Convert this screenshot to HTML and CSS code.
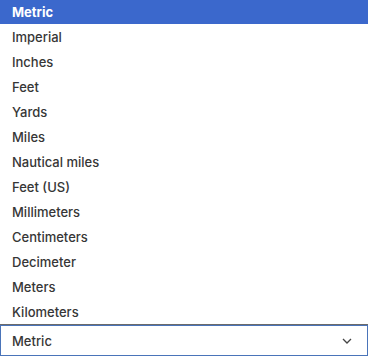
FILE: index.html
```html
<!DOCTYPE html>
<html>
<head>
<meta charset="utf-8">
<link rel="stylesheet" href="styles.css">
</head>
<body>
<div class="picker">
  <ul class="options">
    <li class="option selected">Metric</li>
    <li class="option">Imperial</li>
    <li class="option">Inches</li>
    <li class="option">Feet</li>
    <li class="option">Yards</li>
    <li class="option">Miles</li>
    <li class="option">Nautical miles</li>
    <li class="option">Feet (US)</li>
    <li class="option">Millimeters</li>
    <li class="option">Centimeters</li>
    <li class="option">Decimeter</li>
    <li class="option">Meters</li>
    <li class="option">Kilometers</li>
  </ul>
  <div class="select">
    <span class="value">Metric</span>
    <svg class="chevron" width="10" height="6" viewBox="0 0 10 6"><path d="M1 1 L5 5 L9 1" fill="none" stroke="#444" stroke-width="1.3"/></svg>
  </div>
</div>
</body>
</html>
```
FILE: styles.css
```css
html, body {
  margin: 0;
  padding: 0;
  background: #fff;
}
body {
  font-family: Inter, "Liberation Sans", sans-serif;
  font-size: 13px;
  color: #363636;
  width: 368px;
  height: 356px;
  overflow: hidden;
}
.picker {
  display: flex;
  flex-direction: column;
}
.options {
  list-style: none;
  margin: 0;
  padding: 0;
  height: 324px;
  overflow: hidden;
  border-bottom: 1px solid #6b6b6b;
}
.option {
  height: 25px;
  line-height: 25px;
  padding-left: 12px;
  font-weight: 500;
}
.option.selected {
  background: #3b68cc;
  color: #fff;
  font-weight: 700;
  height: 24px;
  line-height: 24px;
  margin-bottom: 1px;
}
.select {
  height: 29px;
  border: 1px solid #4a74b9;
  display: flex;
  align-items: center;
  justify-content: space-between;
  padding: 0 15px 0 11px;
}
.value {
  font-weight: 500;
}
.chevron {
  display: block;
}
```
